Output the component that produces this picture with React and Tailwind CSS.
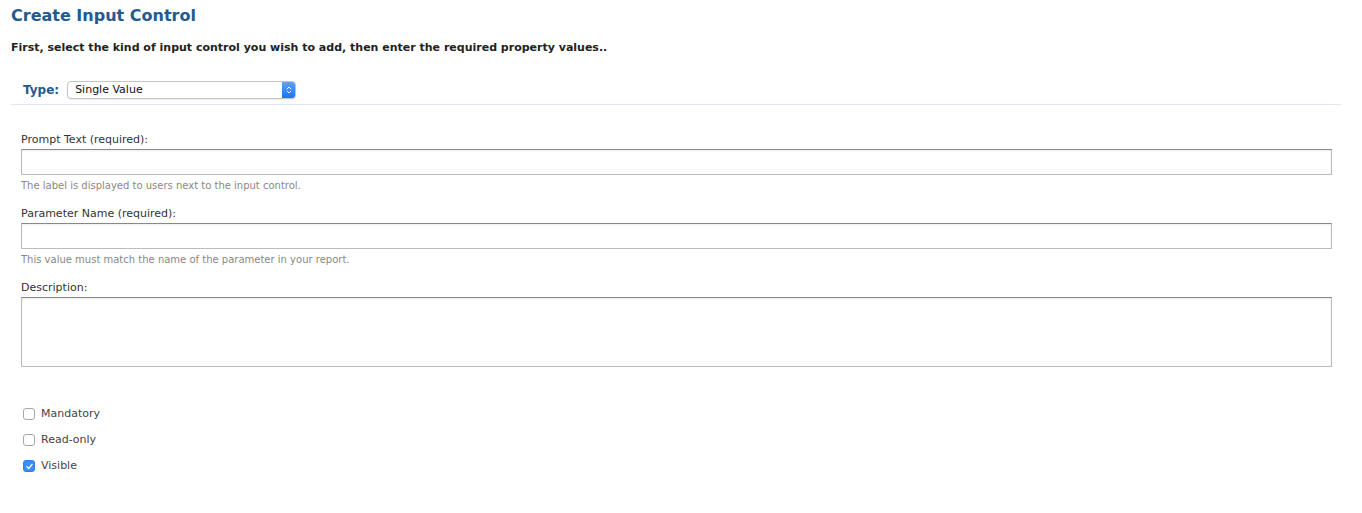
import { useState } from 'react';

const FONT = { fontFamily: '"DejaVu Sans", Verdana, sans-serif' };

function Field({ label, help, tall }) {
  return (
    <div className="flex flex-col">
      <label className="text-[11px] text-[#333] leading-[14px] mb-[2px]">{label}</label>
      {tall ? (
        <textarea className="h-[70px] w-full resize-none border border-[#bbb] border-t-[#888] bg-white shadow-[inset_0_1px_2px_rgba(0,0,0,0.08)] outline-none" />
      ) : (
        <input className="h-[26px] w-full border border-[#bbb] border-t-[#888] bg-white shadow-[inset_0_1px_2px_rgba(0,0,0,0.08)] outline-none" />
      )}
      {help && <p className="text-[10px] text-[#888] leading-[13px] mt-[4px]">{help}</p>}
    </div>
  );
}

function Check({ label, checked, onToggle }) {
  return (
    <label className="flex items-center h-[26px] cursor-pointer" onClick={onToggle}>
      <span
        className={
          checked
            ? 'w-[12px] h-[12px] rounded-[3px] bg-[#3b8cf5] border border-[#2f7de6] flex items-center justify-center ml-[2px]'
            : 'w-[12px] h-[12px] rounded-[3px] bg-white border border-[#a8a8a8] ml-[2px]'
        }
      >
        {checked && (
          <svg viewBox="0 0 12 12" className="w-[9px] h-[9px]">
            <path d="M2.5 6.3 L5 8.6 L9.5 3.2" fill="none" stroke="white" strokeWidth="1.8" strokeLinecap="round" strokeLinejoin="round" />
          </svg>
        )}
      </span>
      <span className="ml-[6px] text-[11px] text-[#444]">{label}</span>
    </label>
  );
}

export default function App() {
  const [checks, setChecks] = useState({ mandatory: false, readonly: false, visible: true });
  const toggle = k => setChecks(p => ({ ...p, [k]: !p[k] }));

  return (
    <div className="min-h-screen bg-white" style={FONT}>
      <div className="pl-[11px] pr-[21px] pt-[6px]">
        <h1 className="text-[16px] font-bold text-[#245a8c] leading-[20px]">Create Input Control</h1>
        <p className="text-[11px] font-bold text-[#222] mt-[15px] leading-[14px]">
          First, select the kind of input control you wish to add, then enter the required property values..
        </p>

        {/* Type selector */}
        <div className="flex items-center pl-[12px] mt-[26px] h-[18px]">
          <span className="text-[12px] font-bold text-[#245a8c] mr-[8px]">Type:</span>
          <div className="flex h-[18px] w-[229px] rounded-[4px] border border-[#c4c4c4] bg-white shadow-[0_1px_1px_rgba(0,0,0,0.08)] overflow-hidden">
            <span className="flex-1 text-[11px] text-[#111] leading-[16px] pl-[7px]">Single Value</span>
            <span className="w-[13px] bg-gradient-to-b from-[#5aa2fb] to-[#1d72ee] flex items-center justify-center">
              <svg viewBox="0 0 8 12" className="w-[6px] h-[10px]">
                <path d="M1.5 4.5 L4 2 L6.5 4.5 M1.5 7.5 L4 10 L6.5 7.5" fill="none" stroke="white" strokeWidth="1.3" strokeLinecap="round" strokeLinejoin="round" />
              </svg>
            </span>
          </div>
        </div>
        <div className="h-px bg-[#e1e7ee] mt-[5px]" />

        {/* Fields */}
        <div className="pl-[10px] pr-[9px] flex flex-col gap-[15px] mt-[28px]">
          <Field label="Prompt Text (required):" help="The label is displayed to users next to the input control." />
          <Field label="Parameter Name (required):" help="This value must match the name of the parameter in your report." />
          <Field label="Description:" tall />
        </div>

        {/* Options */}
        <div className="pl-[10px] mt-[34px] flex flex-col">
          <Check label="Mandatory" checked={checks.mandatory} onToggle={() => toggle('mandatory')} />
          <Check label="Read-only" checked={checks.readonly} onToggle={() => toggle('readonly')} />
          <Check label="Visible" checked={checks.visible} onToggle={() => toggle('visible')} />
        </div>
      </div>
    </div>
  );
}
